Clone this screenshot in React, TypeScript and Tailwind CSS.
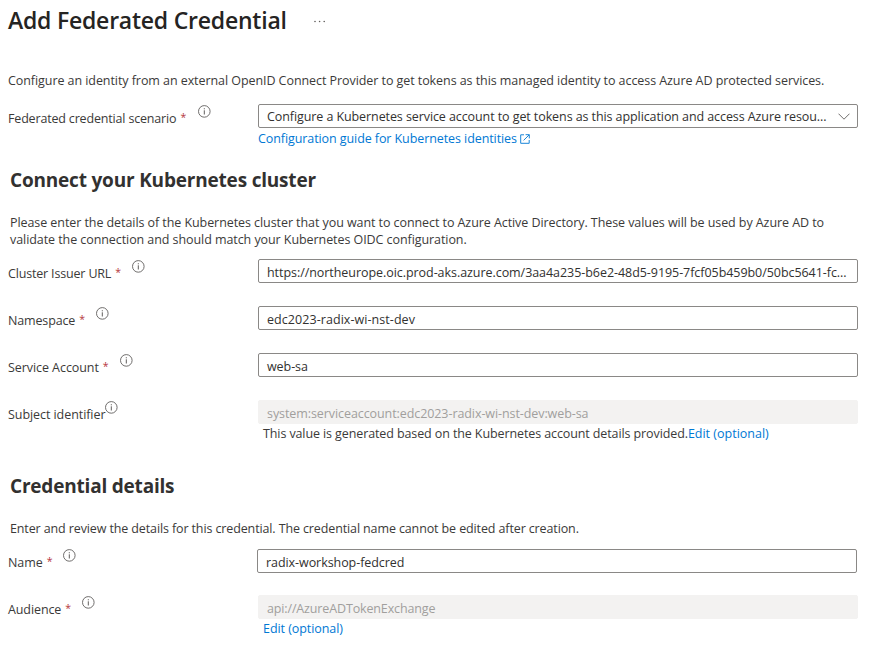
import type { ReactNode } from "react";

function InfoIcon() {
  return (
    <svg className="block h-[13px] w-[13px] shrink-0" viewBox="0 0 13 13" fill="none">
      <circle cx="6.3" cy="6.4" r="5.8" stroke="#605e5c" strokeWidth="0.9" />
      <rect x="5.8" y="5.3" width="1" height="4.2" fill="#605e5c" />
      <rect x="5.8" y="3.2" width="1" height="1.1" fill="#605e5c" />
    </svg>
  );
}

type RowProps = {
  label: string;
  labelClass: string;
  required?: boolean;
  children: ReactNode;
  className?: string;
  column?: string;
};

function Row({ label, labelClass, required = true, children, className = "", column = "w-[250px] pt-px" }: RowProps) {
  return (
    <div className={`flex h-6 items-start ${className}`}>
      <div className={`flex shrink-0 items-start ${column}`}>
        <span className={`mt-[2px] flex shrink-0 leading-6 ${labelClass}`}>
          {label}
          {required && <span className="ml-1 text-[10.5px] leading-[21px] text-[#b5363c]">*</span>}
        </span>
        <InfoIcon />
      </div>
      {children}
    </div>
  );
}

function Field({ children, disabled, className = "pt-[2px]" }: { children: ReactNode; disabled?: boolean; className?: string }) {
  return (
    <div
      className={`h-6 w-[600px] shrink-0 overflow-hidden rounded-[2px] border px-2 leading-[22px] ${className} ${
        disabled ? "border-[#f3f2f1] bg-[#f3f2f1] text-[#a19f9d]" : "border-[#8a8886] text-[#323130]"
      }`}
    >
      {children}
    </div>
  );
}

export default function App() {
  return (
    <main className="h-[645px] w-[873px] overflow-hidden bg-white pl-2 font-['Open_Sans','Noto_Sans',sans-serif] text-[12.5px] tracking-[-0.065px] whitespace-nowrap text-[#3b3a39]">
      <header className="flex h-[41px] items-center">
        <h1 className="w-[306px] text-[23px] leading-[41px] font-semibold tracking-[-0.22px] text-[#252423]">Add Federated Credential</h1>
        <svg className="mt-[2px] h-[3px] w-[12px]" viewBox="0 0 12 3" fill="#605e5c">
          <circle cx="1" cy="1.5" r="0.8" />
          <circle cx="5.6" cy="1.5" r="0.8" />
          <circle cx="10.2" cy="1.5" r="0.8" />
        </svg>
      </header>

      <p className="mt-[31px] leading-[17px] tracking-[-0.067px]">
        Configure an identity from an external OpenID Connect Provider to get tokens as this managed identity to access Azure AD protected services.
      </p>

      <Row className="mt-[15px]" label="Federated credential scenario" labelClass="w-[190px] tracking-[-0.17px]">
        <div className="flex h-6 w-[600px] items-center justify-between rounded-[2px] border border-[#8a8886] pr-[7px] pl-2 text-[#323130]">
          <span className="pt-px leading-[21px] tracking-[-0.087px]">Configure a Kubernetes service account to get tokens as this application and access Azure resou...</span>
          <svg className="mt-px h-[7px] w-[12px]" viewBox="0 0 12 7" fill="none" stroke="#605e5c" strokeWidth="0.9">
            <path d="M0.5 0.7 6 6.2 11.5 0.7" />
          </svg>
        </div>
      </Row>
      <a className="ml-[250px] flex items-center gap-[3px] pt-[2px] leading-[17px] tracking-[-0.085px] text-[#0078d4]">
        <span>Configuration guide for Kubernetes identities</span>
        <svg className="h-[10px] w-[10px]" viewBox="0 0 10 10" fill="none" stroke="#0078d4" strokeWidth="0.9">
          <path d="M4 .8H.7v8.5h8.5V6M5.6.7h3.7v3.7M9.2.8 3.6 6.4" />
        </svg>
      </a>

      <h2 className="mt-[20px] ml-[2px] text-[19px] leading-[26px] font-bold tracking-[-0.19px] text-[#323130]">Connect your Kubernetes cluster</h2>
      <p className="mt-[21px] ml-[2px] leading-[17px] tracking-[-0.072px]">
        Please enter the details of the Kubernetes cluster that you want to connect to Azure Active Directory. These values will be used by Azure AD to
        <br />
        validate the connection and should match your Kubernetes OIDC configuration.
      </p>

      <Row className="mt-[11px]" label="Cluster Issuer URL" labelClass="w-[124px] tracking-[-0.17px]">
        <Field className="pt-[2px] tracking-[-0.055px]">https://northeurope.oic.prod-aks.azure.com/3aa4a235-b6e2-48d5-9195-7fcf05b459b0/50bc5641-fc...</Field>
      </Row>
      <Row className="mt-[23px]" label="Namespace" labelClass="w-[88px] tracking-[-0.15px]">
        <Field className="pt-[2px] tracking-[0.06px]">edc2023-radix-wi-nst-dev</Field>
      </Row>
      <Row className="mt-[23px]" label="Service Account" labelClass="w-[112px]">
        <Field>web-sa</Field>
      </Row>
      <Row className="mt-[23px]" label="Subject identifier" labelClass="w-[97px]" required={false}>
        <Field disabled className="pt-[2px] tracking-[-0.08px]">system:serviceaccount:edc2023-radix-wi-nst-dev:web-sa</Field>
      </Row>
      <p className="ml-[255px] pt-px leading-[17px]">
        <span className="tracking-[-0.105px]">This value is generated based on the Kubernetes account details provided.</span>
        <a className="tracking-[0px] text-[#0078d4]">Edit (optional)</a>
      </p>

      <h2 className="mt-[31px] ml-[2px] text-[19px] leading-[26px] font-bold tracking-[-0.2px] text-[#323130]">Credential details</h2>
      <p className="mt-[21px] ml-[2px] leading-[17px] tracking-[-0.12px]">
        Enter and review the details for this credential. The credential name cannot be edited after creation.
      </p>

      <Row className="mt-[12px]" label="Name" labelClass="w-[55px]" column="w-[249px]">
        <Field>radix-workshop-fedcred</Field>
      </Row>
      <Row className="mt-[22px]" label="Audience" labelClass="w-[74px] tracking-[-0.1px]">
        <Field disabled className="pt-[2px] tracking-[-0.14px]">api://AzureADTokenExchange</Field>
      </Row>
      <p className="ml-[255px] pt-px leading-[17px] text-[#0078d4]">
        <a>Edit (optional)</a>
      </p>
    </main>
  );
}
